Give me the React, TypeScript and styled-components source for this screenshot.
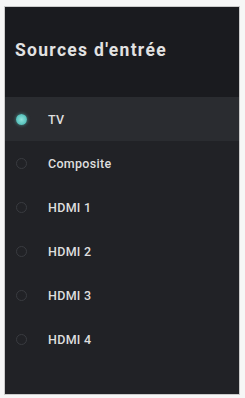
import React from "react";
import styled, { createGlobalStyle } from "styled-components";

const Global = createGlobalStyle`
  html, body { margin: 0; padding: 0; background: #ffffff; }
  body { font-family: Roboto, "Noto Sans", Arial, sans-serif; }
`;

const Page = styled.div`
  width: 245px;
  height: 398px;
  padding: 6px 5px 3px 4px;
  box-sizing: border-box;
  background: #f6f6f6;
`;

const Panel = styled.div`
  height: 100%;
  border: 1px solid #cbcbcb;
  background: #212226;
  display: flex;
  flex-direction: column;
  box-sizing: border-box;
`;

const Header = styled.div`
  height: 90px;
  background: #1a1b1f;
  display: flex;
  align-items: center;
  padding: 0 0 4px 10px;
  box-sizing: border-box;
`;

const Title = styled.h1`
  margin: 0;
  font-family: Roboto, sans-serif;
  font-weight: 700;
  font-size: 17.5px;
  letter-spacing: 1.3px;
  color: #e2e2e2;
`;

const List = styled.div`
  display: flex;
  flex-direction: column;
`;

const Row = styled.div<{ $active?: boolean }>`
  height: 44px;
  display: flex;
  align-items: center;
  padding-left: 11px;
  background: ${(p) => (p.$active ? "#2a2c30" : "transparent")};
`;

const Radio = styled.span<{ $checked?: boolean }>`
  width: 11px;
  height: 11px;
  border-radius: 50%;
  box-sizing: border-box;
  flex: none;
  ${(p) =>
    p.$checked
      ? `background: radial-gradient(circle, #8fe3dc 0%, #5cc5bf 60%, #3f8f8c 100%); box-shadow: 0 0 3px 1px rgba(98,207,201,0.35);`
      : `border: 1.5px solid #393b40;`}
`;

const Label = styled.span`
  margin-left: 21px;
  font-family: Roboto, sans-serif;
  font-size: 12.5px;
  font-weight: 500;
  letter-spacing: 0.3px;
  color: #dedede;
`;

const items = ["TV", "Composite", "HDMI 1", "HDMI 2", "HDMI 3", "HDMI 4"];

export default function App() {
  return (
    <>
      <Global />
      <Page>
        <Panel>
          <Header>
            <Title>Sources d'entrée</Title>
          </Header>
          <List>
            {items.map((it, i) => (
              <Row key={it} $active={i === 0}>
                <Radio $checked={i === 0} />
                <Label>{it}</Label>
              </Row>
            ))}
          </List>
        </Panel>
      </Page>
    </>
  );
}
